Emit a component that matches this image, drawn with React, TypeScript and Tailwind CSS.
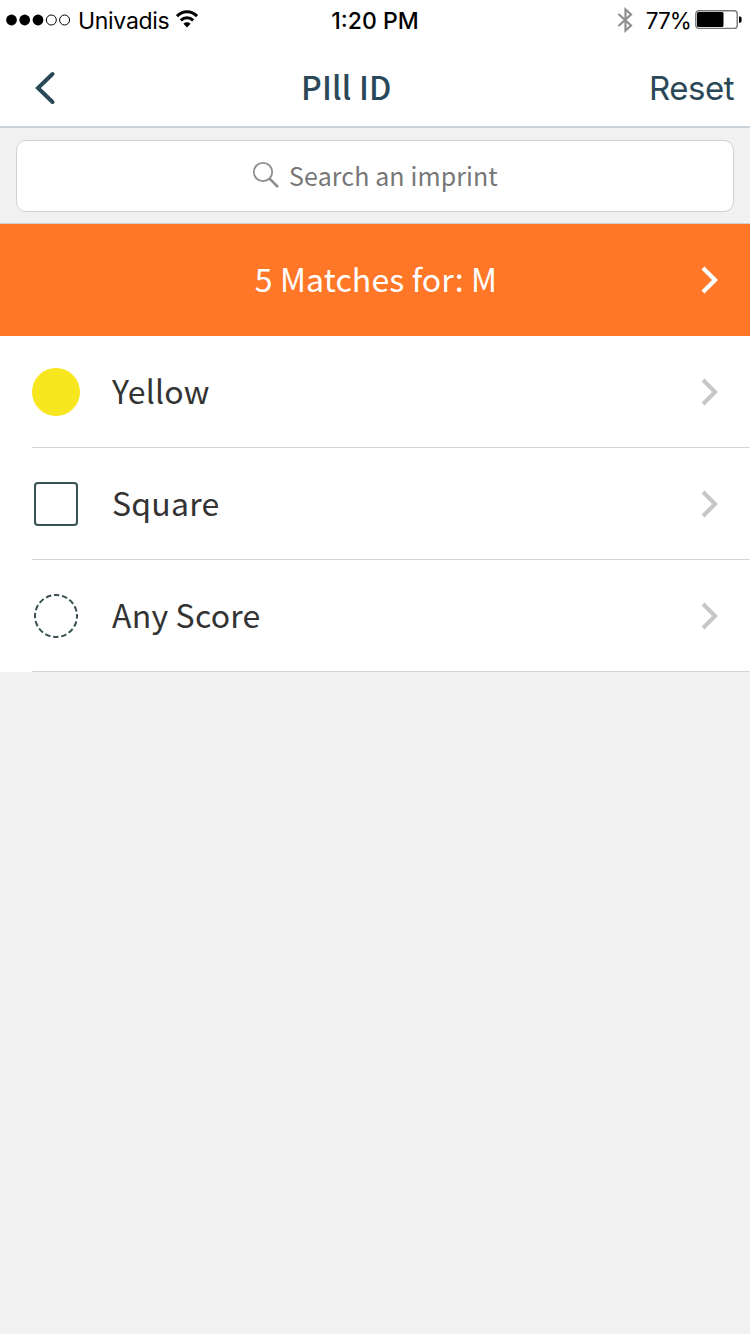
const rows = [
    { id: 1, label: "Yellow", kind: "color" },
    { id: 2, label: "Square", kind: "shape" },
    { id: 3, label: "Any Score", kind: "score" },
];

function Chevron({ className }: { className: string }) {
    return (
        <svg width="18" height="28" viewBox="0 0 18 28" fill="none" className={className}>
            <path d="M2 2 L14 14 L2 26" stroke="currentColor" strokeWidth="4.2" />
        </svg>
    );
}

function RowIcon({ kind }: { kind: string }) {
    if (kind === "color") {
        return <div className="size-12 rounded-full bg-[#f7e61e]" />;
    }
    if (kind === "shape") {
        return <div className="m-0.5 size-11 rounded-[4px] border-2 border-[#385053]" />;
    }
    return (
        <svg width="48" height="48" viewBox="0 0 48 48" fill="none">
            <circle cx="24" cy="24" r="21" stroke="#385053" strokeWidth="2" strokeDasharray="5.5 2.746" strokeDashoffset="2.75" />
        </svg>
    );
}

function StatusBar() {
    return (
        <div className="grid h-10 grid-cols-3 items-center font-[Inter,sans-serif] text-[23px] leading-none text-black">
            <div className="flex items-center pl-1.5">
                <svg width="66" height="12" viewBox="0 0 66 12">
                    <circle cx="5.5" cy="6" r="5.4" />
                    <circle cx="18.7" cy="6" r="5.4" />
                    <circle cx="32" cy="6" r="5.4" />
                    <circle cx="45.3" cy="6" r="5" fill="none" stroke="black" />
                    <circle cx="58.6" cy="6" r="5" fill="none" stroke="black" />
                </svg>
                <span className="ml-1.5 pt-0.5 tracking-[-0.3px]">Univadis</span>
                <svg width="22" height="18" viewBox="0 0 22 18" fill="none" className="mb-0.5 ml-[7px]" stroke="black" strokeWidth="3">
                    <path d="M1 6.2 C6.5 .4 15.5 .4 21 6.2" />
                    <path d="M4.8 10.3 C8.4 6.8 13.6 6.8 17.2 10.3" />
                    <path d="M11 17.5 L7.4 13.7 C9.5 11.9 12.5 11.9 14.6 13.7 Z" fill="black" stroke="none" />
                </svg>
            </div>
            <div className="pt-0.5 text-center font-medium">1:20 PM</div>
            <div className="flex items-center justify-end pr-[7px]">
                <svg width="16" height="26" viewBox="0 0 16 26" fill="none" stroke="#8e8e8e" strokeWidth="2.2">
                    <path d="M1.5 7 L14 18.5 L8.5 23.5 V2.5 L14 7.5 L1.5 19" />
                </svg>
                <span className="ml-[13px] pt-0.5 text-[22.5px] tracking-[-0.9px]">77%</span>
                <svg width="48" height="20" viewBox="0 0 48 20" className="ml-1">
                    <rect x=".8" y=".8" width="41.4" height="17.6" rx="3" fill="none" stroke="#777" strokeWidth="1.4" />
                    <rect x="2" y="2" width="26.5" height="15" rx="1.5" />
                    <path d="M44 6.5 h1 a1.6 1.6 0 0 1 1.6 1.6 v3 a1.6 1.6 0 0 1 -1.6 1.6 h-1 z" />
                </svg>
            </div>
        </div>
    );
}

export default function App() {
    return (
        <div className="flex h-[1334px] w-[750px] flex-col bg-[#f1f1f1] font-['Noto_Sans_CJK_SC',sans-serif]">
            <div className="h-32 border-b-2 border-[#cad2d7] bg-white">
                <StatusBar />
                <div className="flex h-[86px] items-center pt-2.5 pr-4 pl-[34px] text-[#2b4858]">
                    <svg width="24" height="36" viewBox="0 0 24 36" fill="none">
                        <path d="M18.5 4 L4 18 L18.5 32" stroke="currentColor" strokeWidth="4" strokeLinecap="round" />
                    </svg>
                    <h1 className="ml-[243px] pb-1 text-[32px] font-medium tracking-[0.2px]">PIll ID</h1>
                    <button className="ml-auto pt-0.5 font-[Inter,sans-serif] text-[33px] tracking-[-0.5px]">Reset</button>
                </div>
            </div>

            {/* Search */}
            <div className="h-24 border-b border-[#d0d0d0] px-4 pt-3">
                <div className="flex h-[72px] items-center justify-center rounded-[10px] border border-[#d2d2d2] bg-white text-[#777]">
                    <svg width="28" height="28" viewBox="0 0 28 28" fill="none" stroke="#8e8e93" className="mr-[9px] mb-0.5">
                        <circle cx="11" cy="11" r="9.2" strokeWidth="1.8" />
                        <path d="M17.3 17.3 L26 26" strokeWidth="2.6" />
                    </svg>
                    <span className="text-[25px] tracking-[0.1px]">Search an imprint</span>
                </div>
            </div>

            <div className="relative flex h-28 items-center justify-center bg-[#ff7727] text-white">
                <span className="pb-1 pl-0.5 text-[32px] tracking-[0.12px]">5 Matches for: M</span>
                <Chevron className="absolute right-[31px]" />
            </div>

            {/* Criteria */}
            <div className="bg-white pl-8">
                {rows.map((row) => (
                    <div key={row.id} className="flex h-28 items-center border-b border-[#d0d7d9] pr-[31px] text-[#333]">
                        <RowIcon kind={row.kind} />
                        <span className="ml-8 pb-[3px] text-[32px] tracking-[0.2px]">{row.label}</span>
                        <Chevron className="ml-auto text-[#c7c7cb]" />
                    </div>
                ))}
            </div>
        </div>
    );
}
